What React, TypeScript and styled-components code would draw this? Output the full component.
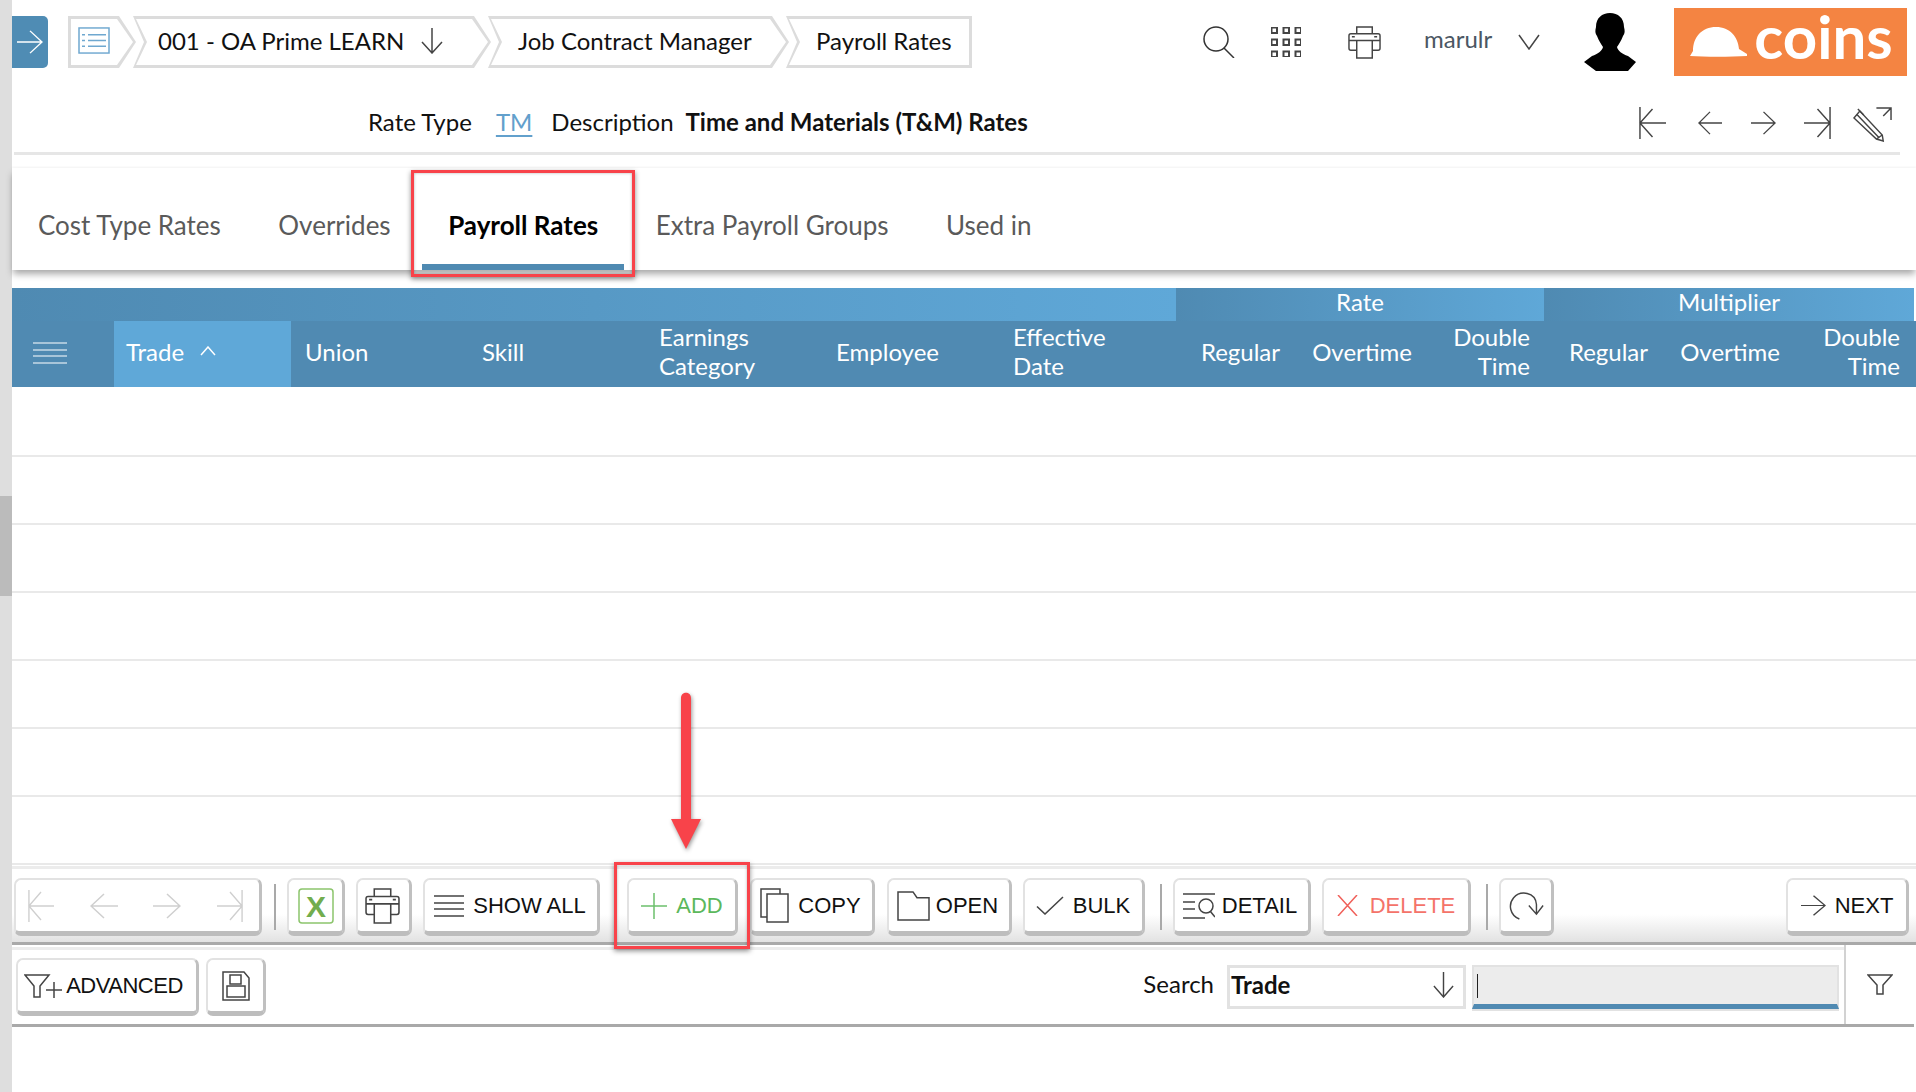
import React from 'react';
import styled, { createGlobalStyle } from 'styled-components';

const Global = createGlobalStyle`
  html, body { margin: 0; padding: 0; background: #fff; }
  body { font-family: Lato, "Liberation Sans", sans-serif; color: #111; }
`;

const Page = styled.div`
  position: relative;
  width: 1916px;
  height: 1092px;
  overflow: hidden;
  display: flex;
  background: #fff;
`;
const ScrollTrack = styled.div`
  width: 12px;
  flex: none;
  background: #dedede;
  padding-top: 496px;
`;
const ScrollThumb = styled.div`
  height: 100px;
  background: #bbbbbb;
`;
const Main = styled.div`
  flex: 1;
  min-width: 0;
  display: flex;
  flex-direction: column;
`;

/* ---- glyphs ---- */
const Glyph = styled.svg<{ $w: number; $h: number; $c?: string; $sw?: number }>`
  width: ${p => p.$w}px;
  height: ${p => p.$h}px;
  flex: none;
  fill: none;
  stroke: ${p => p.$c || '#444'};
  stroke-width: ${p => p.$sw || 1.5};
  display: block;
`;
type G = { w: number; h: number; c?: string; sw?: number };
const mk = (vb: string, body: React.ReactNode) => ({ w, h, c, sw }: G) => (
  <Glyph viewBox={vb} preserveAspectRatio="none" $w={w} $h={h} $c={c} $sw={sw}>{body}</Glyph>
);
const FirstI = mk('0 0 28 32', <path d="M1 0V32M1 16H28M14 2L1 16L14 30" />);
const PrevI = mk('0 0 28 28', <path d="M1 14H28M14 1L1 14L14 27" />);
const NextI = mk('0 0 28 28', <path d="M0 14H27M14 1L27 14L14 27" />);
const LastI = mk('0 0 28 32', <path d="M27 0V32M0 16H27M14 2L27 16L14 30" />);
const DownI = mk('0 0 24 26', <path d="M12 0V25M2 14L12 25L22 14" />);
const ChevI = mk('0 0 22 16', <path d="M1 1L11 15L21 1" />);
const ChevUpI = mk('0 0 16 10', <path d="M1 9L8 1L15 9" />);
const SearchI = mk('0 0 32 32', <g><circle cx="13" cy="13" r="12" /><path d="M21 22L31 32" /></g>);
const GridI = mk('0 0 30 30', (
  <g>
    {[0, 12, 24].flatMap(y => [0, 12, 24].map(x => <rect key={`${x}-${y}`} x={x + 0.5} y={y + 0.5} width="5.5" height="5.5" />))}
  </g>
));
const PrintI = mk('0 0 34 34', (
  <g>
    <path d="M9 8V1H25V8" />
    <path d="M9 25H3Q1 25 1 23V10Q1 8 3 8H31Q33 8 33 10V23Q33 25 31 25H25" />
    <path d="M1 15H33" />
    <path d="M9 15V33H25V15" />
    <path d="M4 11H7M27 11H30" />
  </g>
));
const EditI = mk('0 0 40 38', (
  <g>
    <path d="M1 14L7 7L30 31L31 37L24 35Z" />
    <path d="M4 10.5L27 34M24 35L30 31" />
    <path d="M5 5L11 11" />
    <path d="M24 4H39V16M39 4L31 12" />
  </g>
));
const ListBox = mk('0 0 32 28', (
  <g>
    <rect x="1" y="1" width="30" height="26" />
    <path d="M4 8H7M10 8H28M4 14H7M10 14H28M4 20H7M10 20H28" />
  </g>
));
const LinesI = mk('0 0 30 22', <path d="M0 1H30M0 8H30M0 14H30M0 21H30" />);
const PlusI = mk('0 0 26 26', <path d="M13 0V26M0 13H26" />);
const CopyI = mk('0 0 29 35', (
  <g>
    <path d="M7 29H1V1H20V6" />
    <rect x="7" y="6" width="21" height="28" />
  </g>
));
const FolderI = mk('0 0 33 31', <path d="M1 1H16L20 7H32V30H1Z" />);
const CheckI = mk('0 0 28 20', <path d="M1 11L9 19L27 1" />);
const DetailI = mk('0 0 32 26', (
  <g>
    <path d="M0 1H32M0 9H12M0 16H12M0 25H22" />
    <circle cx="23" cy="13" r="7" />
    <path d="M27 18L32 24" />
  </g>
));
const XI = mk('0 0 21 21', <path d="M1 0L20 21M20 0L1 21" />);
const RefreshI = mk('0 0 40 30', <path d="M13 29C3 25 1 14 7 7C14 -1 30 1 31 14L31 24M23 15L31 24L38 15" />);
const FilterI = mk('0 0 26 21', <path d="M1 1H25L16 11V20H10V11Z" />);
const FilterPlusI = mk('0 0 38 24', (
  <g>
    <path d="M1 1H25L16 12V23H10V12Z" />
    <path d="M22 16H38M30 8V24" />
  </g>
));
const SaveI = mk('0 0 28 30', (
  <g>
    <path d="M1 1H22L27 7V29H1Z" />
    <rect x="8" y="4" width="11" height="9" />
    <rect x="5" y="15" width="18" height="11" />
  </g>
));

const ExcelBox = styled.svg`
  width: 36px;
  height: 36px;
  display: block;
`;
const ExcelIcon = () => (
  <ExcelBox viewBox="0 0 36 36">
    <rect x="1" y="1" width="34" height="34" rx="3" fill="#fff" stroke="#8cc56c" strokeWidth="1.5" />
    <text x="18" y="29" textAnchor="middle" fontFamily="Liberation Sans" fontWeight="700" fontSize="30" fill="#72ad4e">X</text>
  </ExcelBox>
);

/* ---- top bar ---- */
const TopBar = styled.div`
  height: 84px;
  display: flex;
  align-items: center;
`;
const ExpandButton = styled.div`
  width: 36px;
  height: 52px;
  background: #4f8cb4;
  border-radius: 0 5px 5px 0;
  display: flex;
  align-items: center;
  justify-content: center;
`;
const Crumbs = styled.div`
  display: flex;
  margin-left: 20px;
`;
const Crumb = styled.div<{ $w: number; $pos: 'first' | 'mid' | 'last'; $pad: number }>`
  position: relative;
  width: ${p => p.$w}px;
  height: 52px;
  margin-left: ${p => (p.$pos === 'first' ? 0 : -3)}px;
  box-sizing: border-box;
  padding: 0 0 3px ${p => p.$pad}px;
  display: flex;
  align-items: center;
  gap: 16px;
  font-size: 24px;
  background: #dcdcdc;
  clip-path: ${p =>
    p.$pos === 'last'
      ? 'polygon(0 0, 100% 0, 100% 100%, 0 100%, 11px 50%)'
      : p.$pos === 'first'
        ? 'polygon(0 0, calc(100% - 17px) 0, 100% 50%, calc(100% - 17px) 100%, 0 100%)'
        : 'polygon(0 0, calc(100% - 17px) 0, 100% 50%, calc(100% - 17px) 100%, 0 100%, 11px 50%)'};
  &::before {
    content: '';
    position: absolute;
    inset: 0;
    background: #fff;
    clip-path: ${p =>
      p.$pos === 'last'
        ? 'polygon(3px 3px, calc(100% - 3px) 3px, calc(100% - 3px) calc(100% - 3px), 3px calc(100% - 3px), 14px 50%)'
        : p.$pos === 'first'
          ? 'polygon(3px 3px, calc(100% - 19px) 3px, calc(100% - 3px) 50%, calc(100% - 19px) calc(100% - 3px), 3px calc(100% - 3px))'
          : 'polygon(3px 3px, calc(100% - 19px) 3px, calc(100% - 3px) 50%, calc(100% - 19px) calc(100% - 3px), 3px calc(100% - 3px), 14px 50%)'};
  }
  > * { position: relative; }
`;
const TopTools = styled.div`
  margin-left: auto;
  display: flex;
  align-items: center;
  padding-right: 9px;
`;
const UserName = styled.span`
  font-size: 24px;
  color: #4b5763;
  margin: 0 0 7px 43px;
  width: 94px;
`;
const Logo = styled.div`
  width: 233px;
  height: 68px;
  background: #f48442;
  margin-left: 38px;
  display: flex;
  align-items: center;
  justify-content: center;
  gap: 7px;
  color: #fff;
  font: 700 60px/56px Lato, sans-serif;
`;
const LogoText = styled.span`
  display: block;
  height: 56px;
  margin-top: -12px;
`;
const HatSvg = styled.svg`
  width: 57px;
  height: 30px;
  margin-left: 2px;
  fill: #fff;
`;
const AvatarSvg = styled.svg`
  width: 52px;
  height: 58px;
  margin-left: 44px;
  fill: #000;
  filter: blur(0.5px);
`;
const IconGap = styled.span<{ $w: number }>`
  width: ${p => p.$w}px;
  flex: none;
`;

/* ---- record row ---- */
const RecordRow = styled.div`
  height: 71px;
  box-sizing: border-box;
  margin: 0 16px 0 2px;
  border-bottom: 3px solid #e6e6e6;
  display: flex;
  align-items: center;
  font-size: 24px;
  padding: 6px 0 0 354px;
`;
const Field = styled.span<{ $gap: number }>`
  margin-right: ${p => p.$gap}px;
`;
const LinkValue = styled.span`
  color: #62a0cc;
  text-decoration: underline;
  text-decoration-thickness: 2px;
  text-underline-offset: 4px;
  margin-right: 19px;
`;
const BoldValue = styled.span`
  font-weight: 700;
`;
const RecordNav = styled.div`
  margin: 4px 8px 0 auto;
  display: flex;
  align-items: center;
`;

/* ---- tabs ---- */
const TabBar = styled.div`
  margin-top: 13px;
  height: 102px;
  display: flex;
  background: #fff;
  gap: 5.5px;
  box-shadow: 0 5px 7px -1px rgba(0, 0, 0, 0.35), 0 -1px 2px rgba(0, 0, 0, 0.04);
`;
const Tab = styled.div<{ $active?: boolean }>`
  padding: 18px 26px 0;
  height: 102px;
  box-sizing: border-box;
  display: flex;
  align-items: center;
  font-size: 26px;
  font-weight: ${p => (p.$active ? 700 : 400)};
  color: ${p => (p.$active ? '#000' : '#5a5a5a')};
  border-bottom: 6px solid ${p => (p.$active ? '#4f8ab2' : 'transparent')};
`;

/* ---- table ---- */
const COLS = '102px repeat(6, 177px) 118px 132px 118px 118px 132px 120px';
const TableHead = styled.div`
  margin-top: 18px;
  color: #fff;
  font-size: 24px;
`;
const GroupRow = styled.div`
  display: grid;
  grid-template-columns: 1164px 368px 370px;
  height: 33px;
  line-height: 28px;
`;
const GroupCell = styled.div`
  background: linear-gradient(90deg, #4f8ab2, #5fa8d8);
  text-align: center;
`;
const ColumnRow = styled.div`
  display: grid;
  grid-template-columns: ${COLS};
  height: 66px;
  background: #508ab2;
`;
const ColumnCell = styled.div<{ $right?: boolean; $sorted?: boolean }>`
  display: flex;
  align-items: center;
  gap: 16px;
  padding: 0 ${p => (p.$right ? '14px' : '0')} 6px ${p => (p.$sorted ? '12px' : p.$right ? '0' : '14px')};
  justify-content: ${p => (p.$right ? 'flex-end' : 'flex-start')};
  text-align: ${p => (p.$right ? 'right' : 'left')};
  line-height: 29px;
  background: ${p => (p.$sorted ? '#5fa8d8' : 'transparent')};
`;
const MenuCell = styled.div`
  display: flex;
  align-items: center;
  padding: 0 0 2px 21px;
`;
const TableBody = styled.div`
  margin-top: 2px;
`;
const EmptyRow = styled.div`
  height: 68px;
  box-sizing: border-box;
  border-bottom: 2px solid #e9e9e9;
`;

/* ---- toolbars ---- */
const Toolbar = styled.div`
  margin-top: 1px;
  height: 79px;
  box-sizing: border-box;
  border-top: 3px solid #ececec;
  border-bottom: 3px solid #a9a9a9;
  background: linear-gradient(180deg, #fff 0%, #fff 62%, #e2e2e2 100%);
  display: flex;
  align-items: center;
  padding: 3px 7px 0 2px;
`;
const Btn = styled.div<{ $w: number; $ml?: number; $c?: string; $gap?: number; $track?: number; $pr?: number }>`
  width: ${p => p.$w}px;
  height: 58px;
  margin-left: ${p => p.$ml ?? 0}px;
  flex: none;
  box-sizing: border-box;
  background: #fff;
  border: 2px solid #e2e2e2;
  border-right: 3px solid #c0c0c0;
  border-bottom: 5px solid #bdbdbd;
  border-radius: 7px;
  padding-right: ${p => p.$pr ?? 0}px;
  display: flex;
  align-items: center;
  justify-content: center;
  gap: ${p => p.$gap ?? 9}px;
  font: 400 22px "Liberation Sans", Arial, sans-serif;
  letter-spacing: ${p => p.$track ?? 0}px;
  color: ${p => p.$c || '#111'};
`;
const NavBtn = styled(Btn)`
  justify-content: space-between;
  padding: 0 16px 0 12px;
`;
const Sep = styled.div<{ $ml: number; $mr: number }>`
  width: 2px;
  height: 46px;
  background: #a9a9a9;
  margin: 0 ${p => p.$mr}px 0 ${p => p.$ml}px;
  flex: none;
`;
const Spacer = styled.div`
  flex: 1;
`;
const SearchBar = styled.div`
  height: 82px;
  box-sizing: border-box;
  margin-right: 2px;
  border-bottom: 3px solid #a9a9a9;
  display: flex;
  align-items: stretch;
`;
const SearchLeft = styled.div`
  flex: 1;
  border-top: 3px solid #ececec;
  margin-top: 2px;
  display: flex;
  align-items: center;
  padding-left: 4px;
  padding-right: 5px;
`;
const SearchLabel = styled.span`
  font-size: 24px;
  margin: 0 13px 8px 0;
`;
const SelectBox = styled.div`
  width: 239px;
  height: 44px;
  box-sizing: border-box;
  border: 3px solid #e2e2e2;
  display: flex;
  align-items: center;
  justify-content: space-between;
  padding: 0 8px 5px 1px;
  font-size: 24px;
  font-weight: 700;
  margin-right: 6px;
`;
const SearchInput = styled.div`
  width: 367px;
  height: 44px;
  box-sizing: border-box;
  background: #ececec;
  border: 2px solid #e2e2e2;
  border-bottom: 5px solid #508ab2;
  box-shadow: 0 2px 0 #e2e2e2;
  display: flex;
  align-items: center;
  padding-left: 3px;
`;
const Caret = styled.span`
  width: 1px;
  height: 24px;
  background: #222;
`;
const FilterCell = styled.div`
  width: 70px;
  flex: none;
  border-left: 2px solid #d2d2d2;
  display: flex;
  align-items: center;
  justify-content: center;
  box-sizing: border-box;
`;

/* ---- annotations over the picture ---- */
const Highlight = styled.div<{ $x: number; $y: number; $w: number; $h: number }>`
  position: absolute;
  left: ${p => p.$x}px;
  top: ${p => p.$y}px;
  width: ${p => p.$w}px;
  height: ${p => p.$h}px;
  box-sizing: border-box;
  border: 3px solid #f8434a;
  box-shadow: 0 2px 5px rgba(0, 0, 0, 0.45), inset 0 0 3px rgba(0, 0, 0, 0.3);
`;
const ArrowSvg = styled.svg`
  position: absolute;
  left: 666px;
  top: 690px;
  width: 40px;
  height: 166px;
  filter: drop-shadow(1px 2px 2px rgba(0, 0, 0, 0.4));
`;

const columns: { label: React.ReactNode; right?: boolean }[] = [
  { label: 'Union' },
  { label: 'Skill' },
  { label: <>Earnings<br />Category</> },
  { label: 'Employee' },
  { label: <>Effective<br />Date</> },
  { label: 'Regular', right: true },
  { label: 'Overtime', right: true },
  { label: <>Double<br />Time</>, right: true },
  { label: 'Regular', right: true },
  { label: 'Overtime', right: true },
  { label: <>Double<br />Time</>, right: true },
];

export default function App() {
  return (
    <Page>
      <Global />
      <ScrollTrack><ScrollThumb /></ScrollTrack>
      <Main>
        <TopBar>
          <ExpandButton><NextI w={26} h={24} c="#fff" /></ExpandButton>
          <Crumbs>
            <Crumb $w={68} $pos="first" $pad={10}><ListBox w={32} h={27} c="#6fa8d0" /></Crumb>
            <Crumb $w={358} $pos="mid" $pad={25}>
              <span>001 - OA Prime LEARN</span>
              <DownI w={24} h={26} />
            </Crumb>
            <Crumb $w={301} $pos="mid" $pad={30}><span>Job Contract Manager</span></Crumb>
            <Crumb $w={186} $pos="last" $pad={30}><span>Payroll Rates</span></Crumb>
          </Crumbs>
          <TopTools>
            <SearchI w={32} h={32} c="#333" />
            <IconGap $w={36} />
            <GridI w={30} h={30} c="#444" sw={2} />
            <IconGap $w={47} />
            <PrintI w={33} h={33} c="#444" />
            <UserName>marulr</UserName>
            <ChevI w={22} h={16} c="#444" />
            <AvatarSvg viewBox="0 0 52 58">
              <path d="M26 0C34 0 40 5 40 14C41 18 41 20 39 23C37 28 35 31 33 34C34 38 38 41 44 43L52 49L44 58H12L0 49L8 43C14 41 18 38 19 34C17 31 15 28 13 23C11 20 11 18 12 14C12 5 18 0 26 0Z" />
            </AvatarSvg>
            <Logo>
              <HatSvg viewBox="0 0 57 30">
                <path d="M0 29L3 24C3 10 12 0 26 0C40 0 48 10 49 22L57 27V29C40 30 15 30 0 29Z" />
              </HatSvg>
              <LogoText>coins</LogoText>
            </Logo>
          </TopTools>
        </TopBar>

        <RecordRow>
          <Field $gap={24}>Rate Type</Field>
          <LinkValue>TM</LinkValue>
          <Field $gap={12}>Description</Field>
          <BoldValue>Time and Materials (T&amp;M) Rates</BoldValue>
          <RecordNav>
            <FirstI w={27} h={32} />
            <IconGap $w={32} />
            <PrevI w={24} h={24} />
            <IconGap $w={29} />
            <NextI w={25} h={24} />
            <IconGap $w={28} />
            <LastI w={27} h={32} />
            <IconGap $w={22} />
            <EditI w={39} h={38} />
          </RecordNav>
        </RecordRow>

        <TabBar>
          <Tab>Cost Type Rates</Tab>
          <Tab>Overrides</Tab>
          <Tab $active>Payroll Rates</Tab>
          <Tab>Extra Payroll Groups</Tab>
          <Tab>Used in</Tab>
        </TabBar>

        <TableHead>
          <GroupRow>
            <GroupCell />
            <GroupCell>Rate</GroupCell>
            <GroupCell>Multiplier</GroupCell>
          </GroupRow>
          <ColumnRow>
            <MenuCell><LinesI w={34} h={22} c="#fff" sw={1} /></MenuCell>
            <ColumnCell $sorted>Trade <ChevUpI w={16} h={10} c="#fff" /></ColumnCell>
            {columns.map((c, i) => (
              <ColumnCell key={i} $right={c.right}><span>{c.label}</span></ColumnCell>
            ))}
          </ColumnRow>
        </TableHead>

        <TableBody>
          {[0, 1, 2, 3, 4, 5, 6].map(i => <EmptyRow key={i} />)}
        </TableBody>

        <Toolbar>
          <NavBtn $w={248}>
            <FirstI w={26} h={32} c="#cfcfcf" />
            <PrevI w={28} h={26} c="#cfcfcf" />
            <NextI w={28} h={26} c="#cfcfcf" />
            <LastI w={26} h={32} c="#cfcfcf" />
          </NavBtn>
          <Sep $ml={12} $mr={11} />
          <Btn $w={58}><ExcelIcon /></Btn>
          <Btn $w={56} $ml={11} $pr={3}><PrintI w={35} h={36} /></Btn>
          <Btn $w={177} $ml={11} $pr={2}><LinesI w={30} h={22} />SHOW ALL</Btn>
          <Sep $ml={15} $mr={10} />
          <Btn $w={111} $c="#5cb85c"><PlusI w={26} h={26} c="#6cc06c" />ADD</Btn>
          <Btn $w={125} $ml={12} $pr={3}><CopyI w={29} h={35} />COPY</Btn>
          <Btn $w={125} $ml={12} $pr={3} $gap={6}><FolderI w={33} h={30} />OPEN</Btn>
          <Btn $w={122} $ml={11} $pr={1}><CheckI w={28} h={19} />BULK</Btn>
          <Sep $ml={15} $mr={11} />
          <Btn $w={138} $pr={3} $gap={7}><DetailI w={32} h={26} />DETAIL</Btn>
          <Btn $w={149} $ml={11} $c="#f4736a" $gap={12}><XI w={21} h={21} c="#f0605a" />DELETE</Btn>
          <Sep $ml={15} $mr={11} />
          <Btn $w={55}><RefreshI w={38} h={29} /></Btn>
          <Spacer />
          <Btn $w={123}><NextI w={25} h={21} />NEXT</Btn>
        </Toolbar>

        <SearchBar>
          <SearchLeft>
            <Btn $w={183} $c="#111" $gap={4} $track={-0.5} $pr={7}><FilterPlusI w={38} h={24} />ADVANCED</Btn>
            <Btn $w={60} $ml={7}><SaveI w={28} h={30} /></Btn>
            <Spacer />
            <SearchLabel>Search</SearchLabel>
            <SelectBox>Trade<DownI w={23} h={26} /></SelectBox>
            <SearchInput><Caret /></SearchInput>
          </SearchLeft>
          <FilterCell><FilterI w={26} h={21} /></FilterCell>
        </SearchBar>
      </Main>

      <Highlight $x={411} $y={170} $w={224} $h={107} />
      <Highlight $x={614} $y={862} $w={136} $h={87} />
      <ArrowSvg viewBox="0 0 40 166">
        <path fill="#f8434a" d="M15 8C15 1 25 1 25 8V129H35L20 159L5 129H15Z" />
      </ArrowSvg>
    </Page>
  );
}
